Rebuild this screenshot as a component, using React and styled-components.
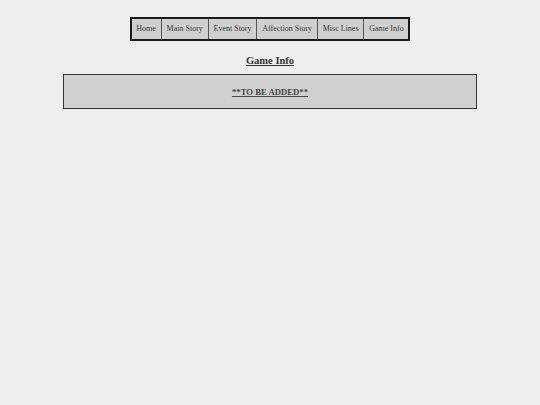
import React from "react";
import styled, { createGlobalStyle } from "styled-components";

const GlobalStyle = createGlobalStyle`
  html, body {
    margin: 0;
    padding: 0;
    background: #eeeeee;
    font-family: "Liberation Serif", "Times New Roman", serif;
    color: #222;
  }
`;

const Page = styled.div`
  display: flex;
  flex-direction: column;
  align-items: center;
  padding-top: 17px;
`;

const Nav = styled.nav`
  display: flex;
  border: 2px solid #1a1a1a;
  background: #d0d0d0;
`;

const NavItem = styled.a`
  display: block;
  padding: 0 4.85px;
  height: 20px;
  line-height: 20px;
  font-size: 8px;
  color: #333;
  text-decoration: none;
  border-left: ${({ first }) => (first ? "none" : "1px solid #555")};
`;

const Title = styled.h3`
  margin: 14px 0 0;
  font-size: 10.5px;
  font-weight: bold;
  text-decoration: underline;
  color: #333;
`;

const Panel = styled.div`
  margin-top: 8px;
  width: 412px;
  height: 33px;
  border: 1px solid #333;
  background: #d0d0d0;
  display: flex;
  align-items: center;
  justify-content: center;
`;

const Notice = styled.span`
  font-size: 8.7px;
  font-weight: bold;
  text-decoration: underline;
  color: #444;
`;

const links = [
  "Home",
  "Main Story",
  "Event Story",
  "Affection Story",
  "Misc Lines",
  "Game Info",
];

export default function App() {
  return (
    <>
      <GlobalStyle />
      <Page>
        <Nav>
          {links.map((l, i) => (
            <NavItem key={l} first={i === 0}>
              {l}
            </NavItem>
          ))}
        </Nav>
        <Title>Game Info</Title>
        <Panel>
          <Notice>**TO BE ADDED**</Notice>
        </Panel>
      </Page>
    </>
  );
}
